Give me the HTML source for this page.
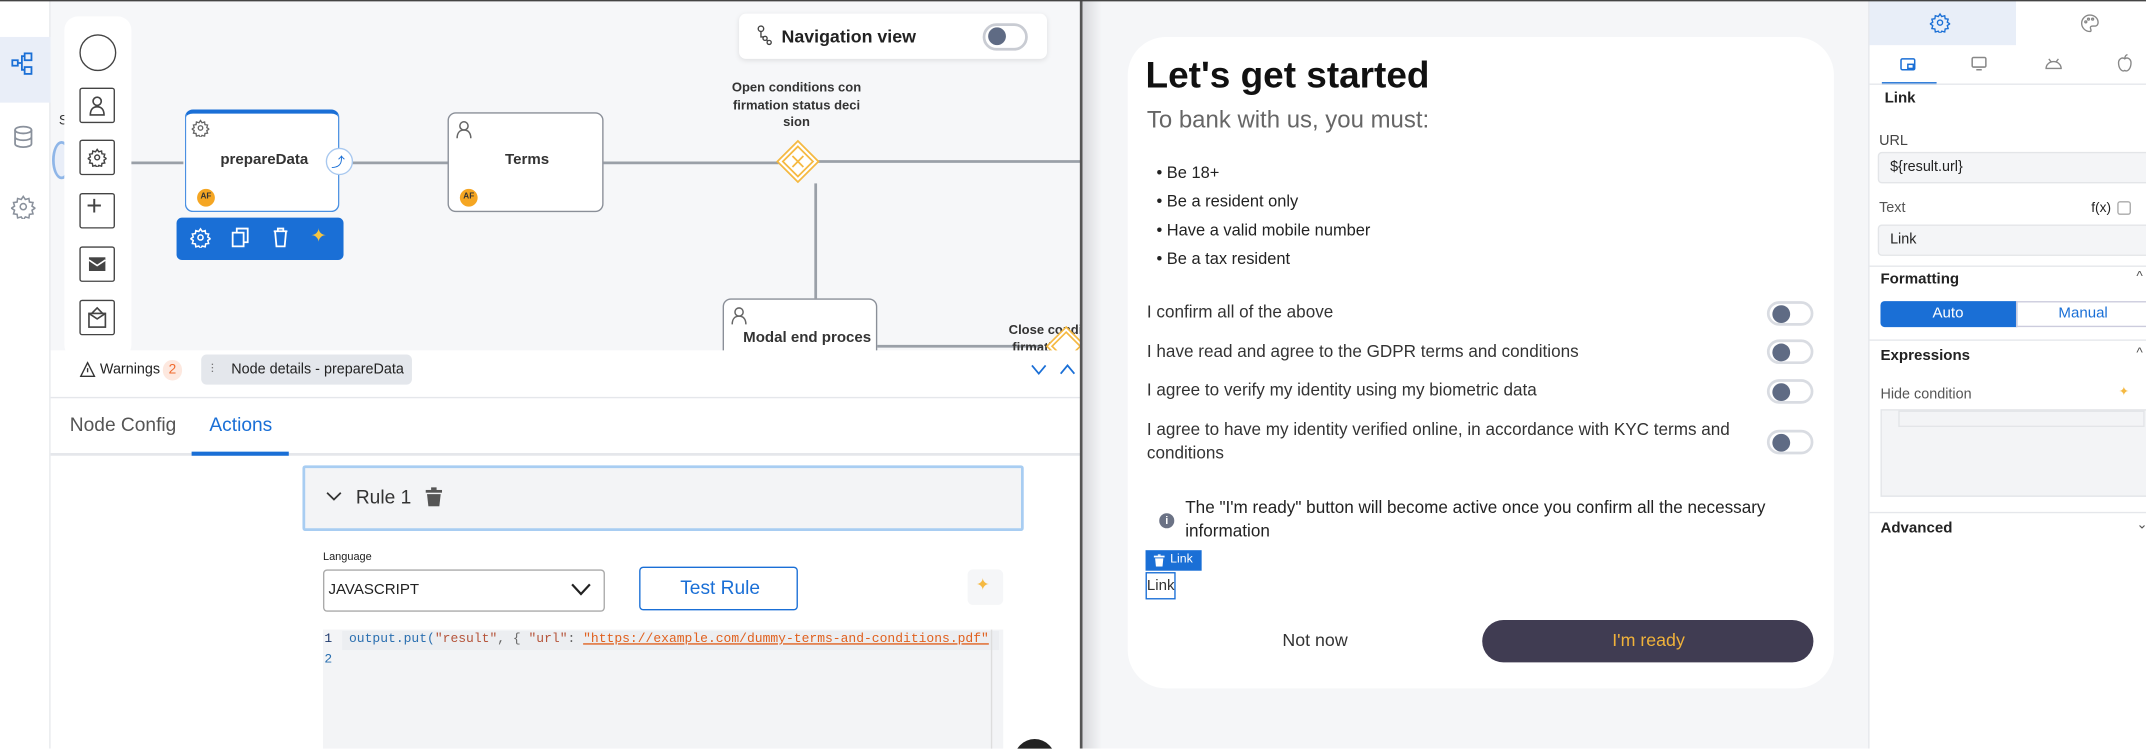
<!DOCTYPE html>
<html><head><meta charset="utf-8"><style>
*{box-sizing:border-box;margin:0;padding:0}
html,body{width:2146px;height:748px;overflow:hidden;background:#fff;font-family:"Liberation Sans",Arial,sans-serif}
#w{position:absolute;left:0;top:0;width:1568px;height:547px;transform:scale(1.36862);transform-origin:0 0;overflow:hidden}
.a{position:absolute}
.t{position:absolute;white-space:nowrap}
.pal{width:26px;height:26px;border:1.5px solid #444;border-radius:2px;left:58px;background:#fff}
.node{background:#fff;border:1.5px solid #8a8f98;border-radius:6px}
.af{width:13px;height:13px;border-radius:50%;background:#f5a623;font-size:6px;font-weight:bold;color:#333;text-align:center;line-height:13px}
.tog{width:34px;height:18px;border:2px solid #d9dce2;border-radius:10px;background:#fff}
.tog:after{content:"";position:absolute;left:2px;top:1px;width:13px;height:13px;border-radius:50%;background:#5f6b84}
.sec{font-size:11px;font-weight:bold;color:#222}
.inp{background:#f4f5f7;border:1px solid #e3e5e8;border-radius:3px}
</style></head><body><div id="w">
<div class="a" style="left:0;top:0;width:1568px;height:1px;background:#444;z-index:9"></div>
<!-- sidebar -->
<div class="a" style="left:0;top:0;width:37px;height:547px;background:#fff;border-right:1px solid #e5e7eb"></div>
<div class="a" style="left:0;top:27px;width:37px;height:48px;background:#e9eef8"></div>
<svg class="a" style="left:8px;top:38px" width="18" height="18" viewBox="0 0 18 18" fill="none" stroke="#1a6fd6" stroke-width="1.3"><rect x="1" y="6" width="4" height="4"/><rect x="10" y="1" width="5" height="5"/><rect x="10" y="11" width="5" height="5"/><path d="M5 8h3v-5h2M8 8v5h2"/></svg>
<svg class="a" style="left:9px;top:91px" width="16" height="18" viewBox="0 0 16 18" fill="none" stroke="#8a919c" stroke-width="1.3"><ellipse cx="8" cy="4" rx="6" ry="2.5"/><path d="M2 4v10c0 1.4 2.7 2.5 6 2.5s6-1.1 6-2.5V4M2 9c0 1.4 2.7 2.5 6 2.5s6-1.1 6-2.5"/></svg>
<svg class="a" style="left:8px;top:142px" width="18" height="18" viewBox="0 0 24 24" fill="none" stroke="#8a919c" stroke-width="1.5"><circle cx="12" cy="12" r="3"/><path d="M12 2l2 3 3.5-1 .5 3.5 3.5.5-1 3.5 3 2-3 2 1 3.5-3.5.5-.5 3.5-3.5-1-2 3-2-3-3.5 1-.5-3.5-3.5-.5 1-3.5-3-2 3-2-1-3.5 3.5-.5.5-3.5 3.5 1z"/></svg>
<!-- canvas -->
<div class="a" style="left:37px;top:0;width:753px;height:256px;background:#f6f7f9"></div>
<div class="a" style="left:38px;top:103px;width:14px;height:28px;border:2px solid #8fb6e8;border-radius:50%;background:#e9eef8"></div>
<div class="t" style="left:43px;top:83px;font-size:10px;color:#333">S</div>
<div class="a" style="left:47px;top:12px;width:49px;height:250px;background:#fff;border-radius:10px"></div>
<div class="a" style="left:58px;top:25px;width:27px;height:27px;border:1.5px solid #444;border-radius:50%"></div>
<div class="a pal" style="top:64px"></div><svg class="a" style="left:64px;top:69px" width="14" height="16" viewBox="0 0 14 16" fill="none" stroke="#444" stroke-width="1.2"><circle cx="7" cy="5" r="3"/><path d="M2 15c0-4 2-6 5-6s5 2 5 6z"/></svg>
<div class="a pal" style="top:102px"></div><svg class="a" style="left:64px;top:108px" width="14" height="14" viewBox="0 0 24 24" fill="none" stroke="#444" stroke-width="1.8"><circle cx="12" cy="12" r="3"/><path d="M12 2l2 3 3.5-1 .5 3.5 3.5.5-1 3.5 3 2-3 2 1 3.5-3.5.5-.5 3.5-3.5-1-2 3-2-3-3.5 1-.5-3.5-3.5-.5 1-3.5-3-2 3-2-1-3.5 3.5-.5.5-3.5 3.5 1z"/></svg>
<div class="a pal" style="top:141px"></div><div class="t" style="left:63px;top:140px;font-size:20px;color:#444;font-weight:200">+</div>
<div class="a pal" style="top:180px"></div><svg class="a" style="left:64px;top:186px" width="14" height="14" viewBox="0 0 14 14"><rect x="1" y="2" width="12" height="10" fill="#444"/><path d="M1 4l6 4 6-4" fill="none" stroke="#fff" stroke-width="1.2"/></svg>
<div class="a pal" style="top:219px"></div><svg class="a" style="left:64px;top:224px" width="14" height="16" viewBox="0 0 14 16" fill="none" stroke="#444" stroke-width="1.2"><rect x="1" y="5" width="12" height="10"/><path d="M1 5l6 4 6-4M3 5l4-4 4 4"/></svg>
<!-- nav view -->
<div class="a" style="left:540px;top:10px;width:225px;height:33px;background:#fff;border-radius:5px;box-shadow:0 1px 4px rgba(0,0,0,.1)"></div>
<svg class="a" style="left:553px;top:18px" width="12" height="16" viewBox="0 0 12 16" fill="none" stroke="#444" stroke-width="1"><circle cx="3" cy="3" r="2"/><circle cx="6" cy="10" r="1.5"/><circle cx="9" cy="13" r="1.5"/><path d="M3 5v4h2M7 11l1 1"/></svg>
<div class="t" style="left:571px;top:19px;font-size:13px;font-weight:bold;color:#222">Navigation view</div>
<div class="a tog" style="left:718px;top:17px;width:33px;height:20px;border-color:#c9ccd3"></div>
<!-- lines -->
<div class="a" style="left:96px;top:118px;width:38px;height:1.5px;background:#9aa0a8"></div>
<div class="a" style="left:248px;top:118px;width:79px;height:1.5px;background:#9aa0a8"></div>
<div class="a" style="left:441px;top:118px;width:128px;height:1.5px;background:#9aa0a8"></div>
<div class="a" style="left:597px;top:117px;width:193px;height:1.5px;background:#9aa0a8"></div>
<div class="a" style="left:595px;top:134px;width:1.5px;height:84px;background:#9aa0a8"></div>
<div class="a" style="left:641px;top:252px;width:120px;height:1.5px;background:#9aa0a8"></div>
<!-- nodes -->
<div class="a node" style="left:135px;top:80px;width:113px;height:75px;border-color:#4a90e2;border-top:3px solid #1a6fd6"></div>
<svg class="a" style="left:140px;top:87px" width="13" height="13" viewBox="0 0 24 24" fill="none" stroke="#666" stroke-width="1.8"><circle cx="12" cy="12" r="3"/><path d="M12 2l2 3 3.5-1 .5 3.5 3.5.5-1 3.5 3 2-3 2 1 3.5-3.5.5-.5 3.5-3.5-1-2 3-2-3-3.5 1-.5-3.5-3.5-.5 1-3.5-3-2 3-2-1-3.5 3.5-.5.5-3.5 3.5 1z"/></svg>
<div class="t" style="left:161px;top:111px;font-size:11px;font-weight:bold;color:#333">prepareData</div>
<div class="a af" style="left:144px;top:138px">AF</div>
<div class="a" style="left:238px;top:108px;width:20px;height:20px;border-radius:50%;background:#fff;border:1.5px solid #a8c8ef"></div>
<div class="t" style="left:242px;top:110px;font-size:10px;color:#1a6fd6">⤴</div>
<div class="a node" style="left:327px;top:82px;width:114px;height:73px"></div>
<svg class="a" style="left:333px;top:88px" width="12" height="14" viewBox="0 0 12 14" fill="none" stroke="#666" stroke-width="1.1"><circle cx="6" cy="4" r="3"/><path d="M1 13c0-4 2-6 5-6s5 2 5 6"/></svg>
<div class="t" style="left:369px;top:111px;font-size:11px;font-weight:bold;color:#333">Terms</div>
<div class="a af" style="left:336px;top:138px">AF</div>
<div class="t" style="left:530px;top:59px;width:104px;font-size:9.5px;font-weight:bold;color:#333;text-align:center;line-height:12.5px;white-space:normal">Open conditions con firmation status deci sion</div>
<svg class="a" style="left:567px;top:102px" width="32" height="32" viewBox="0 0 32 32" fill="#fff" stroke="#f5b942" stroke-width="1.3"><path d="M16 1L31 16 16 31 1 16z"/><path d="M16 5L27 16 16 27 5 16z"/><path d="M12 12l8 8M20 12l-8 8"/></svg>
<div class="a node" style="left:528px;top:218px;width:113px;height:50px"></div>
<svg class="a" style="left:534px;top:224px" width="12" height="14" viewBox="0 0 12 14" fill="none" stroke="#666" stroke-width="1.1"><circle cx="6" cy="4" r="3"/><path d="M1 13c0-4 2-6 5-6s5 2 5 6"/></svg>
<div class="t" style="left:543px;top:241px;font-size:11px;font-weight:bold;color:#333">Modal end proces</div>
<div class="t" style="left:737px;top:235px;font-size:9.5px;font-weight:bold;color:#333;line-height:13px">Close condi<br>&nbsp;firmation</div>
<svg class="a" style="left:764px;top:238px" width="30" height="30" viewBox="0 0 32 32" fill="#fff" stroke="#f5b942" stroke-width="1.3"><path d="M16 1L31 16 16 31 1 16z"/><path d="M16 5L27 16 16 27 5 16z"/></svg>
<!-- blue toolbar -->
<div class="a" style="left:129px;top:159px;width:122px;height:31px;background:#1a6fd6;border-radius:4px"></div>
<svg class="a" style="left:139px;top:166px" width="15" height="15" viewBox="0 0 24 24" fill="none" stroke="#fff" stroke-width="1.8"><circle cx="12" cy="12" r="3"/><path d="M12 2l2 3 3.5-1 .5 3.5 3.5.5-1 3.5 3 2-3 2 1 3.5-3.5.5-.5 3.5-3.5-1-2 3-2-3-3.5 1-.5-3.5-3.5-.5 1-3.5-3-2 3-2-1-3.5 3.5-.5.5-3.5 3.5 1z"/></svg>
<svg class="a" style="left:169px;top:166px" width="14" height="15" viewBox="0 0 14 15" fill="none" stroke="#fff" stroke-width="1.3"><rect x="1" y="4" width="8" height="10"/><path d="M4 4V1h8v10H9"/></svg>
<svg class="a" style="left:199px;top:166px" width="12" height="15" viewBox="0 0 12 15" fill="none" stroke="#fff" stroke-width="1.3"><path d="M1 3h10M4 3V1h4v2M2 3l1 11h6l1-11"/></svg>
<div class="t" style="left:227px;top:164px;font-size:14px;color:#f5c542">✦</div>
<!-- bottom panel -->
<div class="a" style="left:37px;top:256px;width:753px;height:291px;background:#fff"></div>
<svg class="a" style="left:58px;top:264px" width="12" height="12" viewBox="0 0 12 12" fill="none" stroke="#333" stroke-width="1"><path d="M6 1L11 11H1z"/><path d="M6 5v3"/></svg>
<div class="t" style="left:73px;top:264px;font-size:10.5px;color:#222">Warnings</div>
<div class="a" style="left:119px;top:263px;width:14px;height:15px;border-radius:7px;background:#fde8df;color:#f06a2e;font-size:10px;text-align:center;line-height:15px">2</div>
<div class="a" style="left:147px;top:259px;width:154px;height:22px;background:#e4e7ec;border-radius:4px"></div>
<div class="t" style="left:154px;top:264px;font-size:9px;color:#555">⫶</div>
<div class="t" style="left:169px;top:264px;font-size:10.5px;color:#222">Node details - prepareData</div>
<svg class="a" style="left:752px;top:264px" width="36" height="12" viewBox="0 0 36 12" fill="none" stroke="#1a6fd6" stroke-width="1.3"><path d="M2 3l5 6 5-6M23 9l5-6 5 6"/></svg>
<div class="a" style="left:37px;top:290px;width:753px;height:1px;background:#e5e7eb"></div>
<div class="t" style="left:51px;top:302px;font-size:14px;color:#555">Node Config</div>
<div class="t" style="left:153px;top:302px;font-size:14px;color:#1a6fd6">Actions</div>
<div class="a" style="left:37px;top:331px;width:753px;height:2px;background:#e5e7eb"></div>
<div class="a" style="left:140px;top:330px;width:71px;height:3px;background:#1a6fd6"></div>
<div class="a" style="left:221px;top:340px;width:527px;height:48px;background:#f3f4f6;border:2px solid #a8cdf2;border-radius:2px"></div>
<svg class="a" style="left:238px;top:358px" width="12" height="9" viewBox="0 0 12 9" fill="none" stroke="#333" stroke-width="1.3"><path d="M1 2l5 5 5-5"/></svg>
<div class="t" style="left:260px;top:355px;font-size:14px;color:#333">Rule 1</div>
<svg class="a" style="left:311px;top:356px" width="12" height="14" viewBox="0 0 12 14" fill="#555"><rect x="0" y="2" width="12" height="2"/><rect x="4" y="0" width="4" height="2"/><path d="M1 5h10l-1 9H2z"/></svg>
<div class="t" style="left:236px;top:402px;font-size:8px;color:#222">Language</div>
<div class="a" style="left:236px;top:416px;width:206px;height:31px;border:1px solid #aaa;border-radius:3px;background:#fff"></div>
<div class="t" style="left:240px;top:425px;font-size:11px;color:#222">JAVASCRIPT</div>
<svg class="a" style="left:417px;top:426px" width="15" height="10" viewBox="0 0 15 10" fill="none" stroke="#222" stroke-width="1.6"><path d="M1 1l6.5 7L14 1"/></svg>
<div class="a" style="left:467px;top:414px;width:116px;height:32px;border:1.5px solid #1a6fd6;border-radius:3px"></div>
<div class="t" style="left:497px;top:421px;font-size:14px;color:#1a6fd6">Test Rule</div>
<div class="a" style="left:707px;top:416px;width:26px;height:26px;background:#f5f6f8;border-radius:4px"></div>
<div class="t" style="left:713px;top:420px;font-size:12px;color:#f5b942">✦</div>
<div class="a" style="left:236px;top:460px;width:497px;height:90px;background:#f3f4f6"></div>
<div class="a" style="left:250px;top:461px;width:480px;height:14px;background:#eceef1"></div>
<div class="a" style="left:724px;top:460px;width:1px;height:90px;background:#ddd"></div>
<div class="t" style="left:237px;top:461px;font-family:'Liberation Mono',monospace;font-size:9.5px;color:#1f3a6e">1</div>
<div class="t" style="left:237px;top:476px;font-family:'Liberation Mono',monospace;font-size:9.5px;color:#2a6fb0">2</div>
<div class="t" style="left:255px;top:461px;font-family:'Liberation Mono',monospace;font-size:9.5px;color:#2a6fb0">output.put(<span style="color:#b5543a">"result"</span><span style="color:#666">, { </span><span style="color:#b5543a">"url"</span><span style="color:#666">: </span><span style="color:#e0601e;text-decoration:underline">"https://example.com/dummy-terms-and-conditions.pdf"</span></div>
<div class="a" style="left:741px;top:540px;width:30px;height:30px;border-radius:50%;background:#222"></div>
<!-- divider -->
<div class="a" style="left:789px;top:0;width:2px;height:547px;background:#555"></div>
<!-- preview -->
<div class="a" style="left:791px;top:0;width:574px;height:547px;background:#f5f6f8"></div>
<div class="a" style="left:791px;top:0;width:14px;height:547px;background:linear-gradient(90deg,#d8d9dc,#f5f6f8)"></div>
<div class="a" style="left:824px;top:27px;width:516px;height:476px;background:#fff;border-radius:28px"></div>
<div class="t" style="left:837px;top:40px;font-size:27px;font-weight:bold;color:#111">Let's get started</div>
<div class="t" style="left:838px;top:77px;font-size:17.5px;color:#666">To bank with us, you must:</div>
<div class="t" style="left:845px;top:116px;font-size:12px;color:#222;line-height:21px">• Be 18+<br>• Be a resident only<br>• Have a valid mobile number<br>• Be a tax resident</div>
<div class="t" style="left:838px;top:221px;font-size:12.5px;color:#333">I confirm all of the above</div>
<div class="t" style="left:838px;top:250px;font-size:12.5px;color:#333">I have read and agree to the GDPR terms and conditions</div>
<div class="t" style="left:838px;top:278px;font-size:12.5px;color:#333">I agree to verify my identity using my biometric data</div>
<div class="t" style="left:838px;top:306px;font-size:12.5px;color:#333;line-height:17px">I agree to have my identity verified online, in accordance with KYC terms and<br>conditions</div>
<div class="a tog" style="left:1291px;top:220px"></div>
<div class="a tog" style="left:1291px;top:248px"></div>
<div class="a tog" style="left:1291px;top:277px"></div>
<div class="a tog" style="left:1291px;top:314px"></div>
<div class="a" style="left:847px;top:375px;width:11px;height:11px;border-radius:50%;background:#6b7285;color:#fff;font-size:8px;text-align:center;line-height:11px;font-weight:bold">i</div>
<div class="t" style="left:866px;top:363px;font-size:12.5px;color:#222;line-height:17px">The "I'm ready" button will become active once you confirm all the necessary<br>information</div>
<div class="a" style="left:837px;top:402px;width:41px;height:15px;background:#1a6fd6"></div>
<svg class="a" style="left:843px;top:405px" width="8" height="9" viewBox="0 0 8 9" fill="#fff"><rect x="0" y="1" width="8" height="1.3"/><rect x="3" y="0" width="2" height="1"/><path d="M1 3h6l-.6 6H1.6z"/></svg>
<div class="t" style="left:855px;top:403px;font-size:9px;color:#fff">Link</div>
<div class="a" style="left:837px;top:418px;width:22px;height:20px;border:1px solid #1a6fd6"></div>
<div class="t" style="left:838px;top:422px;font-size:11px;color:#333">Link</div>
<div class="t" style="left:937px;top:460px;font-size:13px;color:#333">Not now</div>
<div class="a" style="left:1083px;top:453px;width:242px;height:31px;background:#403c52;border-radius:16px"></div>
<div class="t" style="left:1178px;top:460px;font-size:13px;color:#f0b23a">I'm ready</div>
<!-- right panel -->
<div class="a" style="left:1365px;top:0;width:203px;height:547px;background:#fff;border-left:1px solid #e5e7eb"></div>
<div class="a" style="left:1366px;top:0;width:107px;height:33px;background:#e8eef8"></div>
<svg class="a" style="left:1410px;top:9px" width="15" height="15" viewBox="0 0 24 24" fill="none" stroke="#1a6fd6" stroke-width="1.6"><circle cx="12" cy="12" r="3"/><path d="M12 2l2 3 3.5-1 .5 3.5 3.5.5-1 3.5 3 2-3 2 1 3.5-3.5.5-.5 3.5-3.5-1-2 3-2-3-3.5 1-.5-3.5-3.5-.5 1-3.5-3-2 3-2-1-3.5 3.5-.5.5-3.5 3.5 1z"/></svg>
<svg class="a" style="left:1520px;top:10px" width="14" height="14" viewBox="0 0 14 14" fill="none" stroke="#888" stroke-width="1"><path d="M7 1a6 6 0 100 12c1 0 1-1 .5-2s0-2 1.5-2h2c1 0 2-1 2-2.5C13 3.5 10.5 1 7 1z"/><circle cx="4" cy="6" r=".7"/><circle cx="6" cy="4" r=".7"/><circle cx="9" cy="4" r=".7"/></svg>
<svg class="a" style="left:1388px;top:42px" width="12" height="10" viewBox="0 0 12 10" fill="none" stroke="#1a6fd6" stroke-width="1.1"><rect x="1" y="1" width="10" height="8" rx="1"/><rect x="6" y="5" width="4" height="3"/></svg>
<svg class="a" style="left:1440px;top:41px" width="12" height="11" viewBox="0 0 12 11" fill="none" stroke="#888" stroke-width="1.1"><rect x="1" y="1" width="10" height="7" rx="1"/><path d="M4 10h4"/></svg>
<svg class="a" style="left:1494px;top:42px" width="13" height="9" viewBox="0 0 13 9" fill="none" stroke="#888" stroke-width="1"><path d="M1 8a5.5 5 0 0111 0zM3 1l1.5 2M10 1L8.5 3"/></svg>
<svg class="a" style="left:1547px;top:39px" width="11" height="14" viewBox="0 0 11 14" fill="none" stroke="#888" stroke-width="1"><path d="M5.5 4c-2-1.5-5 0-4.5 4 .5 4 3 5.5 4.5 4.5 1.5 1 4 -.5 4.5-4.5.5-4-2.5-5.5-4.5-4zM5.5 4c0-2 1-3 2-3"/></svg>
<div class="a" style="left:1375px;top:60px;width:40px;height:1.5px;background:#1a6fd6"></div>
<div class="a" style="left:1366px;top:61px;width:202px;height:1px;background:#e5e7eb"></div>
<div class="t sec" style="left:1377px;top:66px">Link</div>
<div class="t" style="left:1373px;top:97px;font-size:10.5px;color:#444">URL</div>
<div class="a inp" style="left:1372px;top:111px;width:200px;height:23px"></div>
<div class="t" style="left:1381px;top:116px;font-size:10.5px;color:#222">${result.url}</div>
<div class="t" style="left:1373px;top:146px;font-size:10.5px;color:#555">Text</div>
<div class="t" style="left:1528px;top:147px;font-size:10px;color:#222">f(x)</div>
<div class="a" style="left:1547px;top:147px;width:10px;height:10px;border:1px solid #aaa;border-radius:2px"></div>
<div class="a inp" style="left:1372px;top:164px;width:200px;height:23px"></div>
<div class="t" style="left:1381px;top:169px;font-size:10.5px;color:#222">Link</div>
<div class="a" style="left:1366px;top:194px;width:202px;height:1px;background:#e5e7eb"></div>
<div class="t sec" style="left:1374px;top:198px">Formatting</div>
<div class="t" style="left:1561px;top:197px;font-size:10px;color:#555">^</div>
<div class="a" style="left:1374px;top:220px;width:100px;height:19px;background:#1a6fd6;border-radius:3px 0 0 3px"></div>
<div class="a" style="left:1473px;top:220px;width:100px;height:19px;border:1px solid #ccd;"></div>
<div class="t" style="left:1412px;top:223px;font-size:11px;color:#fff">Auto</div>
<div class="t" style="left:1504px;top:223px;font-size:11px;color:#1a6fd6">Manual</div>
<div class="a" style="left:1366px;top:248px;width:202px;height:1px;background:#e5e7eb"></div>
<div class="t sec" style="left:1374px;top:254px">Expressions</div>
<div class="t" style="left:1561px;top:253px;font-size:10px;color:#555">^</div>
<div class="t" style="left:1374px;top:282px;font-size:10.5px;color:#555">Hide condition</div>
<div class="t" style="left:1548px;top:281px;font-size:9px;color:#f5b942">✦</div>
<div class="a" style="left:1374px;top:299px;width:200px;height:64px;background:#f3f4f6;border:1px solid #e3e5e8"></div>
<div class="a" style="left:1387px;top:300px;width:180px;height:12px;border:1px solid #e3e5e8"></div>
<div class="a" style="left:1366px;top:374px;width:202px;height:1px;background:#e5e7eb"></div>
<div class="t sec" style="left:1374px;top:380px">Advanced</div>
<div class="t" style="left:1561px;top:378px;font-size:10px;color:#555">⌄</div>
</div></body></html>
